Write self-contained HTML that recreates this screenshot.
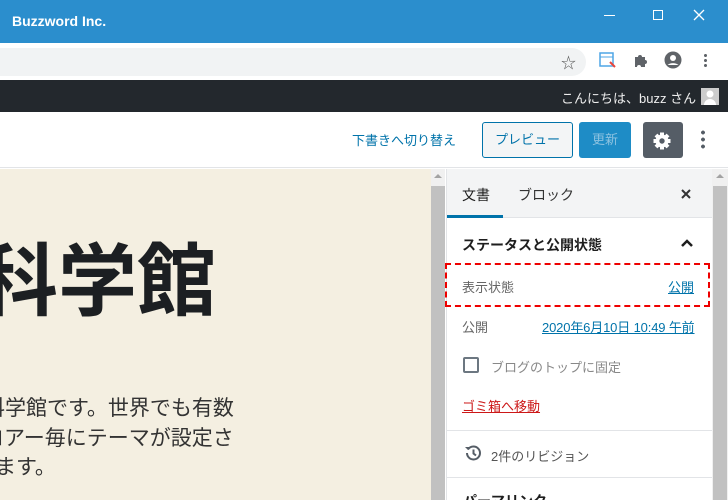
<!DOCTYPE html>
<html><head><meta charset="utf-8"><style>
*{margin:0;padding:0;box-sizing:border-box}
html,body{width:728px;height:500px;overflow:hidden}
body{position:relative;font-family:"Liberation Sans","Noto Sans CJK JP",sans-serif;background:#fff}
.a{position:absolute}
.clip{position:absolute;left:0;top:169px;width:431px;height:331px;overflow:hidden;background:#f4efe1}
</style></head><body>
<div class="a" style="left:0;top:0;width:728px;height:43px;background:#2b8ecd"></div>
<div class="a" style="left:12px;top:13px;color:#fff;font-size:14px;font-weight:bold">Buzzword Inc.</div>
<div class="a" style="left:604px;top:15px;width:11px;height:1px;background:#fff"></div>
<div class="a" style="left:653px;top:10px;width:10px;height:10px;border:1px solid #fff"></div>
<svg class="a" style="left:693px;top:9px" width="12" height="12"><path d="M1 1L11 11M11 1L1 11" stroke="#fff" stroke-width="1.3"/></svg>
<div class="a" style="left:0;top:43px;width:728px;height:37px;background:#fff"></div>
<div class="a" style="left:-20px;top:48px;width:606px;height:28px;background:#f1f3f4;border-radius:14px"></div>
<div class="a" style="left:561px;top:52px;font-size:15px;color:#555">☆</div>
<svg class="a" style="left:599px;top:51px" width="18" height="18"><rect x="1" y="2" width="13" height="13" fill="#fff" stroke="#4ea5e6" stroke-width="1.5"/><line x1="1" y1="6" x2="14" y2="6" stroke="#4ea5e6"/><path d="M11 11 L16 16" stroke="#e8453c" stroke-width="2"/></svg>
<svg class="a" style="left:633px;top:52px" width="16" height="16"><path d="M2 5h3a2 2 0 014 0h3v3a2 2 0 010 4v3H8a2 2 0 00-4 0H2z" fill="#5f6368"/></svg>
<svg class="a" style="left:664px;top:51px" width="18" height="18"><circle cx="9" cy="9" r="8.5" fill="#5f6368"/><circle cx="9" cy="7" r="3" fill="#fff"/><path d="M3.5 14a7 5 0 0111 0" fill="#fff"/></svg>
<div class="a" style="left:704px;top:53px;width:3px;height:15px;background:radial-gradient(circle,#5f6368 1.4px,transparent 1.6px) 0 0/3px 5px"></div>
<div class="a" style="left:0;top:80px;width:728px;height:32px;background:#23282d"></div>
<div class="a" style="left:561px;top:88px;color:#eee;font-size:13px">こんにちは、buzz さん</div>
<div class="a" style="left:701px;top:88px;width:18px;height:17px;background:#ccc"><svg width="18" height="17"><circle cx="9" cy="6" r="3.5" fill="#fff"/><path d="M3 17a6 6 0 0112 0" fill="#fff"/></svg></div>
<div class="a" style="left:0;top:112px;width:728px;height:56px;background:#fff;border-bottom:1px solid #e2e4e7"></div>
<div class="a" style="left:352px;top:130px;color:#0073aa;font-size:13px">下書きへ切り替え</div>
<div class="a" style="left:482px;top:122px;width:91px;height:36px;border:1px solid #0073aa;border-radius:3px;background:#f3f5f6;color:#0073aa;font-size:13px;text-align:center;line-height:34px">プレビュー</div>
<div class="a" style="left:579px;top:122px;width:52px;height:36px;border-radius:3px;background:#1e8cc6;color:#8cc2e0;font-size:13px;text-align:center;line-height:36px">更新</div>
<div class="a" style="left:643px;top:122px;width:40px;height:36px;border-radius:3px;background:#555d66"></div>
<svg class="a" style="left:652px;top:131px" width="20" height="20" viewBox="0 0 20 20"><g fill="#fff"><circle cx="10" cy="10" r="6.5"/><rect x="8" y="1.5" width="4" height="17"/><rect x="1.5" y="8" width="17" height="4"/><rect x="8" y="1.5" width="4" height="17" transform="rotate(45 10 10)"/><rect x="8" y="1.5" width="4" height="17" transform="rotate(-45 10 10)"/></g><circle cx="10" cy="10" r="2.7" fill="#555d66"/></svg>
<div class="a" style="left:701px;top:129px;width:4px;height:20px;background:radial-gradient(circle,#555d66 1.8px,transparent 2px) 0 0/4px 7px"></div>
<div class="clip">
<div class="a" style="left:-21px;top:63px;font-size:79px;font-weight:bold;color:#1c1f22;line-height:100px;white-space:nowrap">科学館</div>
<div class="a" style="left:-16px;top:225px;font-size:21px;color:#333;line-height:30px;white-space:nowrap">科学館です。世界でも有数</div>
<div class="a" style="left:-38px;top:255px;font-size:21px;color:#333;line-height:30px;white-space:nowrap">フロアー毎にテーマが設定さ</div>
<div class="a" style="left:-47px;top:284px;font-size:21px;color:#333;line-height:30px;white-space:nowrap">されます。</div>
</div>
<div class="a" style="left:431px;top:169px;width:14px;height:331px;background:#f0f0f0"></div>
<div class="a" style="left:431px;top:186px;width:14px;height:314px;background:#c1c1c1"></div>
<div class="a" style="left:434px;top:174px;border:4px solid transparent;border-bottom:4px solid #a3a3a3;border-top:0"></div>
<div class="a" style="left:712px;top:169px;width:16px;height:331px;background:#f0f0f0"></div>
<div class="a" style="left:713px;top:186px;width:14px;height:314px;background:#c1c1c1"></div>
<div class="a" style="left:716px;top:174px;border:4px solid transparent;border-bottom:4px solid #a3a3a3;border-top:0"></div>
<div class="a" style="left:446px;top:169px;width:266px;height:331px;background:#fff;border-left:1px solid #e2e4e7;overflow:hidden">
<div class="a" style="left:16px;top:322px;font-size:14px;font-weight:bold;color:#1e1e1e">パーマリンク</div>
</div>
<div class="a" style="left:447px;top:169px;width:265px;height:49px;background:#f3f4f5;border-bottom:1px solid #e2e4e7"></div>
<div class="a" style="left:447px;top:215px;width:56px;height:3px;background:#0073aa"></div>
<div class="a" style="left:462px;top:185px;font-size:14px;color:#1e1e1e">文書</div>
<div class="a" style="left:518px;top:185px;font-size:14px;color:#333">ブロック</div>
<svg class="a" style="left:681px;top:189px" width="10" height="10"><path d="M1 1L9 9M9 1L1 9" stroke="#333" stroke-width="2"/></svg>
<div class="a" style="left:462px;top:235px;font-size:14px;font-weight:bold;color:#1e1e1e">ステータスと公開状態</div>
<svg class="a" style="left:680px;top:238px" width="14" height="10"><path d="M2 8l5-5 5 5" stroke="#1e1e1e" stroke-width="2.5" fill="none"/></svg>
<div class="a" style="left:445px;top:263px;width:265px;height:44px;border:2px dashed #e00"></div>
<div class="a" style="left:462px;top:277px;font-size:13px;color:#666">表示状態</div>
<div class="a" style="left:668px;top:277px;font-size:13px;color:#0073aa;text-decoration:underline">公開</div>
<div class="a" style="left:462px;top:317px;font-size:13px;color:#666">公開</div>
<div class="a" style="left:542px;top:317px;font-size:13px;color:#0073aa;text-decoration:underline;white-space:nowrap;letter-spacing:-0.15px">2020年6月10日 10:49 午前</div>
<div class="a" style="left:463px;top:357px;width:16px;height:16px;border:2px solid #6c7781;border-radius:2px"></div>
<div class="a" style="left:491px;top:357px;font-size:13px;color:#888">ブログのトップに固定</div>
<div class="a" style="left:462px;top:396px;font-size:13px;color:#cc1818;text-decoration:underline">ゴミ箱へ移動</div>
<div class="a" style="left:447px;top:430px;width:265px;height:1px;background:#e2e4e7"></div>
<svg class="a" style="left:464px;top:444px" width="18" height="18" viewBox="0 0 18 18"><path d="M3 9a6.5 6.5 0 106.5-6.5A6.5 6.5 0 004 5.5" stroke="#555d66" stroke-width="2" fill="none"/><path d="M1 3l3 3 3-3z" fill="#555d66"/><path d="M9.5 5.5v4l2.5 2" stroke="#555d66" stroke-width="2" fill="none"/></svg>
<div class="a" style="left:491px;top:446px;font-size:13px;color:#555">2件のリビジョン</div>
<div class="a" style="left:447px;top:477px;width:265px;height:1px;background:#e2e4e7"></div>
</body></html>
